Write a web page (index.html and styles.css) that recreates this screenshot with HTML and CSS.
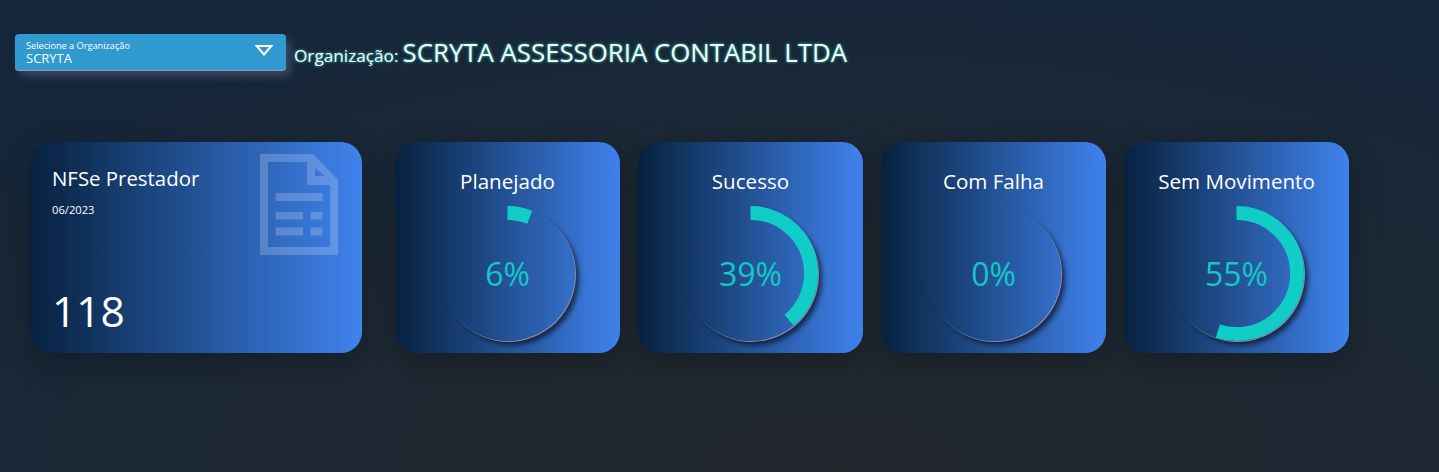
FILE: index.html
```html
<!DOCTYPE html>
<html lang="pt-BR">
  <head>
    <meta charset="UTF-8" />
    <title>Dashboard</title>
    <link rel="stylesheet" href="styles.css">
  </head>
  <body>
    <header class="top">
      <div class="org-select">
        <div class="org-select-text">
          <span class="org-select-label">Selecione a Organização</span>
          <span class="org-select-value">SCRYTA</span>
        </div>
        <svg class="org-select-arrow" viewBox="0 0 18 11" width="18" height="11">
          <path d="M1.5 1 H16.5 L9 9.5 Z" fill="none" stroke="#fff" stroke-width="2" />
        </svg>
      </div>
      <p class="org-name">
        <span class="org-name-label">Organização:</span>
        <span class="org-name-value">SCRYTA ASSESSORIA CONTABIL LTDA</span>
      </p>
    </header>

    <main class="cards">
      <!-- Total -->
      <section class="card total">
        <h2 class="total-title">NFSe Prestador</h2>
        <p class="total-date">06/2023</p>
        <p class="total-number">118</p>
        <svg class="total-icon" viewBox="0 0 78 101" width="78" height="101">
          <path fill-rule="evenodd" d="M0 0 H53 L78 26 V101 H0 Z M8 8 V93 H70 V31 H47 V8 Z M55 14 V22 H65 Z" />
          <path d="M15.5 39 H62.5 V47 H15.5 Z M15.5 58 H43 V65.5 H15.5 Z M50.5 58 H62.5 V65.5 H50.5 Z M15.5 73.5 H43 V81.5 H15.5 Z M50.5 73.5 H62.5 V81.5 H50.5 Z" />
        </svg>
      </section>

      <!-- Status -->
      <section class="card status">
        <h2 class="status-title">Planejado</h2>
        <div class="gauge">
          <svg class="gauge-arc" viewBox="0 0 136 136"><circle cx="68" cy="68" r="61" pathLength="100" stroke-dasharray="6 100" /></svg>
          <span class="gauge-value">6%</span>
        </div>
      </section>
      <section class="card status">
        <h2 class="status-title">Sucesso</h2>
        <div class="gauge">
          <svg class="gauge-arc" viewBox="0 0 136 136"><circle cx="68" cy="68" r="61" pathLength="100" stroke-dasharray="39 100" /></svg>
          <span class="gauge-value">39%</span>
        </div>
      </section>
      <section class="card status">
        <h2 class="status-title">Com Falha</h2>
        <div class="gauge">
          <svg class="gauge-arc" viewBox="0 0 136 136"><circle cx="68" cy="68" r="61" pathLength="100" stroke-dasharray="0 100" /></svg>
          <span class="gauge-value">0%</span>
        </div>
      </section>
      <section class="card status">
        <h2 class="status-title">Sem Movimento</h2>
        <div class="gauge">
          <svg class="gauge-arc" viewBox="0 0 136 136"><circle cx="68" cy="68" r="61" pathLength="100" stroke-dasharray="55 100" /></svg>
          <span class="gauge-value">55%</span>
        </div>
      </section>
    </main>
  </body>
</html>
```

FILE: styles.css
```css
* {
  box-sizing: border-box;
}
html,
body {
  height: 100%;
}
body {
  margin: 0;
  overflow: hidden;
  font-family: "Open Sans", "Noto Sans", sans-serif;
  color: #fff;
  background: radial-gradient(ellipse 80% 110% at 58% 100%, #23282d 0%, #1d2833 50%, #15263a 100%);
}
h2,
p {
  margin: 0;
  font-weight: 400;
}

/* Header */
.top {
  display: flex;
  align-items: center;
  gap: 8px;
  padding: 34px 0 0 15px;
}
.org-select {
  width: 271px;
  height: 36px;
  display: flex;
  align-items: center;
  justify-content: space-between;
  padding: 0 13px 0 11px;
  background: #2f99d0;
  border-radius: 4px;
  box-shadow: 0 1px 0 #a78fb8, 5px 6px 8px rgba(120, 140, 170, 0.35);
}
.org-select-text {
  display: flex;
  flex-direction: column;
}
.org-select-label {
  font-size: 9.2px;
  line-height: 11px;
}
.org-select-value {
  font-size: 13px;
  line-height: 14px;
}
.org-select-arrow {
  margin-top: -4px;
}
.org-name {
  margin-top: -1px;
  color: #f2fffb;
  text-shadow: 0 0 3px #35d6c0;
}
.org-name-label {
  font-size: 17.2px;
}
.org-name-value {
  font-size: 25.8px;
}

/* Cards */
.cards {
  display: flex;
  gap: 18px;
  padding: 72px 0 0 30px;
}
.card {
  position: relative;
  height: 211px;
  border-radius: 21px;
  background: linear-gradient(to right, #07213e, #4083ee);
  box-shadow: 0 10px 30px rgba(0, 0, 0, 0.25);
}
.total {
  width: 332px;
  margin-right: 15px;
  padding: 23px 22px;
}
.total-title {
  font-size: 20.4px;
  line-height: 27px;
}
.total-date {
  margin-top: 11px;
  font-size: 11.2px;
  line-height: 14px;
}
.total-number {
  margin-top: 66px;
  font-size: 42.5px;
  line-height: 56px;
}
.total-icon {
  position: absolute;
  top: 12px;
  right: 24px;
  fill: rgba(255, 255, 255, 0.2);
}
.status {
  width: 225px;
  display: flex;
  flex-direction: column;
  align-items: center;
  padding-top: 26px;
}
.status-title {
  font-size: 20.6px;
  line-height: 27px;
}

/* Gauge */
.gauge {
  position: relative;
  width: 135px;
  height: 135px;
  margin-top: 11px;
  display: flex;
  align-items: center;
  justify-content: center;
  border-radius: 50%;
  box-shadow: 1px 1px 0 rgba(205, 190, 225, 0.65), 5px 5px 5px -1px rgba(0, 0, 0, 0.6);
}
.gauge-arc {
  position: absolute;
  inset: 0;
  transform: rotate(-90deg);
}
.gauge-arc circle {
  fill: none;
  stroke: #10cdc7;
  stroke-width: 14;
}
.gauge-value {
  font-size: 32px;
  font-weight: 400;
  color: #12c8c8;
}
```
